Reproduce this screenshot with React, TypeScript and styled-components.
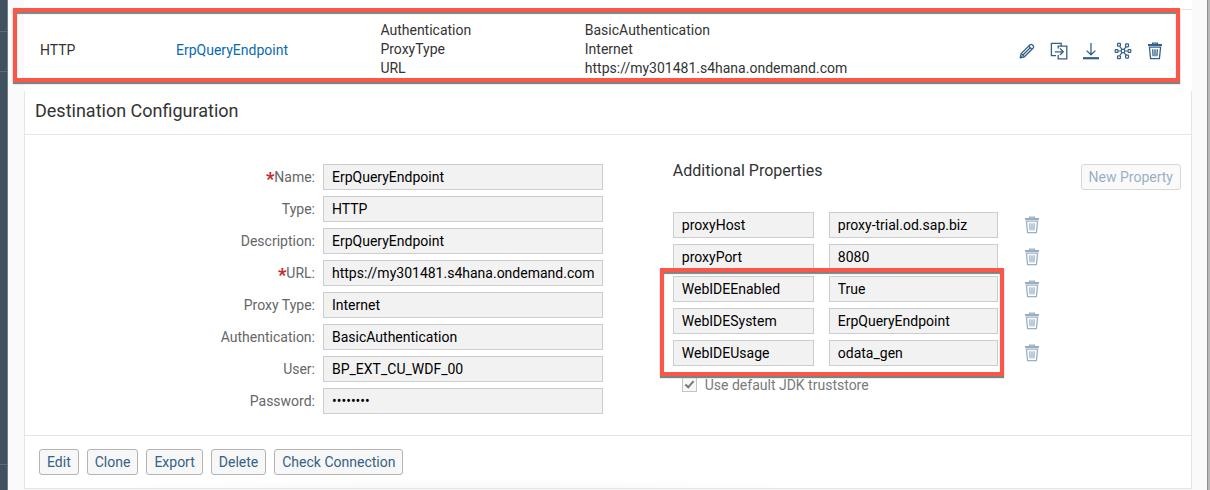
import React from "react";
import styled, { createGlobalStyle } from "styled-components";

const GlobalStyle = createGlobalStyle`
  *, *::before, *::after { box-sizing: border-box; }
  body {
    margin: 0;
    background: #fafafa;
    color: #333;
    font-family: Roboto, "Liberation Sans", sans-serif;
    font-size: 14px;
    line-height: 20px;
  }
`;

const Shell = styled.div`
  display: flex;
  min-height: 100vh;
`;

const Rail = styled.div`
  display: flex;
  flex-direction: column;
  flex: 0 0 8px;
  background: #3f5161;
  border-right: 1px solid #6f7d89;
`;

const RailSlot = styled.div<{ $height?: number }>`
  ${({ $height }) => ($height ? `height: ${$height}px;` : "flex: 1;")}
  border-bottom: 1px solid #5a6c7b;
`;

const RailEnd = styled.div`
  height: 25px;
`;

const WindowEdge = styled.div`
  flex: 0 0 3px;
  background: #b9b9b9;
  border-left: 1px solid #8f8f8f;
`;

const Main = styled.main`
  flex: 1;
  min-width: 0;
  padding: 0 15px 0 16px;
`;

const ListArea = styled.section`
  position: relative;
  padding: 9px 0;
  background: #fff;
`;

const Frame = styled.div`
  position: absolute;
  border: 4px solid #fc5648;
  box-shadow: 0 2px 1px #7d8381, inset 0 2px 1px #7d8381;
  pointer-events: none;
`;

const RowFrame = styled(Frame)`
  inset: 8px 12px 9px -11px;
`;

const GroupFrame = styled(Frame)`
  inset: -8px 0 -10px -13px;
  width: calc(64% + 19px);
`;

const DestinationTable = styled.table`
  width: 100%;
  border-collapse: collapse;
  table-layout: fixed;
  border-top: 1px solid #e5e5e5;
`;

const Cell = styled.td<{ $width?: string }>`
  width: ${({ $width }) => $width || "auto"};
  height: 72px;
  padding: 8px 0 0 16px;
  vertical-align: middle;
`;

const ActionCell = styled.td`
  padding: 10px 21px 0 0;
`;

const Line = styled.div`
  line-height: 19px;
  white-space: nowrap;
`;

const DestinationLink = styled.a`
  color: #0a6ab0;
  text-decoration: none;
`;

const Actions = styled.div`
  display: flex;
  justify-content: flex-end;
`;

const IconButton = styled.button<{ $muted?: boolean }>`
  display: flex;
  flex: 0 0 32px;
  align-items: center;
  justify-content: center;
  height: 26px;
  padding: 0;
  border: 0;
  background: none;
  color: #346187;
  opacity: ${({ $muted }) => ($muted ? 0.5 : 1)};
`;

const Panel = styled.section`
  background: #fff;
  border: 1px solid #e5e5e5;
  border-top: 0;
`;

const PanelHeader = styled.header`
  padding: 8px 10px 11px;
  border-bottom: 1px solid #e5e5e5;
`;

const PanelTitle = styled.h1`
  margin: 0;
  font-size: 18px;
  line-height: 24px;
  font-weight: 400;
`;

const PanelBody = styled.div`
  display: grid;
  grid-template-columns: minmax(0, 5fr) minmax(0, 4fr);
  padding: 29px 0 21px;
`;

const Form = styled.form`
  display: flex;
  flex-direction: column;
  gap: 6px;
  padding-right: 70px;
`;

const FormRow = styled.div`
  display: flex;
  align-items: center;
  gap: 8px;
`;

const Label = styled.label`
  flex: 0 0 290px;
  text-align: right;
  color: #666;
`;

const Required = styled.span`
  color: #c22f33;
  font-size: 18px;
  font-weight: 900;
  line-height: 16px;
  vertical-align: bottom;
`;

const Field = styled.input`
  flex: 1;
  width: 100%;
  min-width: 0;
  height: 26px;
  padding: 0 8px;
  border: 1px solid #ccc;
  border-radius: 0;
  background: #f2f2f2;
  color: #000;
  font: inherit;
  outline: 0;
`;

const Properties = styled.div`
  padding-right: 10px;
`;

const PropertiesHeader = styled.div`
  display: flex;
  justify-content: space-between;
  margin-bottom: 22px;
`;

const PropertiesTitle = styled.h2`
  margin: 0;
  font-size: 16px;
  line-height: 14px;
  font-weight: 400;
`;

const Button = styled.button`
  height: 26px;
  padding: 0 7px;
  border: 1px solid #b3b3b3;
  border-radius: 3px;
  background: #f7f7f7;
  color: #346187;
  font: inherit;
  &:disabled {
    opacity: 0.5;
  }
`;

const PropertyGroup = styled.div`
  position: relative;
  display: flex;
  flex-direction: column;
  gap: 6px;
  margin-bottom: 6px;
`;

const PropertyRow = styled.div`
  display: flex;
  gap: 18px;
`;

const PropertyFields = styled.div`
  display: grid;
  grid-template-columns: 5fr 6fr;
  gap: 15px;
  width: 64%;
`;

const CheckLabel = styled.label`
  display: flex;
  align-items: center;
  gap: 8px;
  padding: 3px 0 0 9px;
  color: #7a7a7a;
`;

const Checkbox = styled.input`
  appearance: none;
  width: 15px;
  height: 15px;
  margin: 0;
  border: 1px solid #c4c4c4;
  background: #f7f7f7;
  display: grid;
  place-items: center;
  &:checked::after {
    content: "";
    width: 5px;
    height: 9px;
    margin-top: -2px;
    border: solid #777;
    border-width: 0 2px 2px 0;
    transform: rotate(42deg);
  }
`;

const PanelFooter = styled.footer`
  display: flex;
  gap: 8px;
  padding: 13px 14px;
  border-top: 1px solid #e5e5e5;
  background: radial-gradient(ellipse 34% 30% at 37% 110%, #f5f5f5, #fff);
`;

const Svg = ({ children }: { children: React.ReactNode }) => (
  <svg width="18" height="18" viewBox="0 0 18 18" fill="none" stroke="currentColor" strokeWidth="1.3" aria-hidden="true">
    {children}
  </svg>
);

const PencilIcon = () => (
  <Svg>
    <path d="M2.2 15.8 3.2 11.6 12 2.8Q13.2 1.8 14.4 3L15.2 3.8Q16.2 4.9 15.2 6L6.4 14.8Z" strokeLinejoin="round" />
    <path d="M3.2 11.6 6.4 14.8M10.8 4.2 13.8 7.2M5.2 12.8 12 6" />
    <path d="M2 16 2.7 13.2 4.8 15.3Z" fill="currentColor" stroke="none" />
  </Svg>
);

const CloneIcon = () => (
  <Svg>
    <path d="M6 13.6H1.4V1.4H11.2V4M8.2 6.4V4.2H16.8V16.8H8.2V13M4.8 9.8H13M10 6.4 13.2 9.8 10 13" />
  </Svg>
);

const ExportIcon = () => (
  <Svg>
    <path d="M9 1V12.6M4.6 8.6 9 12.8 13.4 8.6" />
    <path d="M1 16.2H17" strokeWidth="2.2" />
  </Svg>
);

const NetworkIcon = () => (
  <Svg>
    <g strokeWidth="1.2">
      <path d="M4 9H7.4M10.6 9H14M5.8 4.6 8 7.4M12.2 4.6 10 7.4M5.8 13.4 8 10.6M12.2 13.4 10 10.6" />
      <rect x="7.4" y="7.4" width="3.2" height="3.2" rx="0.8" />
      <rect x="1.2" y="7.7" width="2.7" height="2.7" rx="0.5" />
      <rect x="14.1" y="7.7" width="2.7" height="2.7" rx="0.5" />
      <rect x="3.5" y="1.3" width="2.9" height="2.9" rx="0.5" />
      <rect x="11.6" y="1.9" width="2.9" height="2.9" rx="0.5" />
      <rect x="3.5" y="13.8" width="2.9" height="2.9" rx="0.5" />
      <rect x="11.6" y="13.2" width="2.9" height="2.9" rx="0.5" />
    </g>
  </Svg>
);

const TrashIcon = () => (
  <Svg>
    <path d="M2 3H16" strokeWidth="2" />
    <path d="M6.6 2V1.2H11.4V2M3.4 5.2 4.6 16.6H13.4L14.6 5.2M2.8 5.2H15.2M6.7 7.2 7.1 14.2M9 7.2V14.2M11.3 7.2 10.9 14.2" />
  </Svg>
);

const rowActions = [
  { name: "Edit", Icon: PencilIcon },
  { name: "Clone", Icon: CloneIcon },
  { name: "Export", Icon: ExportIcon },
  { name: "Check Connection", Icon: NetworkIcon },
  { name: "Delete", Icon: TrashIcon },
];

const fields = [
  { id: "name", label: "Name", value: "ErpQueryEndpoint", required: true },
  { id: "type", label: "Type", value: "HTTP" },
  { id: "description", label: "Description", value: "ErpQueryEndpoint" },
  { id: "url", label: "URL", value: "https://my301481.s4hana.ondemand.com", required: true },
  { id: "proxy-type", label: "Proxy Type", value: "Internet" },
  { id: "authentication", label: "Authentication", value: "BasicAuthentication" },
  { id: "user", label: "User", value: "BP_EXT_CU_WDF_00" },
  { id: "password", label: "Password", value: "password", type: "password" },
];

const proxyProperties = [
  ["proxyHost", "proxy-trial.od.sap.biz"],
  ["proxyPort", "8080"],
];

const webIdeProperties = [
  ["WebIDEEnabled", "True"],
  ["WebIDESystem", "ErpQueryEndpoint"],
  ["WebIDEUsage", "odata_gen"],
];

const PropertyRows = ({ items }: { items: string[][] }) => (
  <>
    {items.map(([key, value]) => (
      <PropertyRow key={key}>
        <PropertyFields>
          <Field readOnly aria-label={`${key} key`} value={key} />
          <Field readOnly aria-label={`${key} value`} value={value} />
        </PropertyFields>
        <IconButton type="button" disabled $muted aria-label={`Delete ${key}`}>
          <TrashIcon />
        </IconButton>
      </PropertyRow>
    ))}
  </>
);

export default function App() {
  return (
    <>
      <GlobalStyle />
      <Shell>
        <Rail>
          <RailSlot $height={32} />
          <RailSlot $height={40} />
          <RailSlot />
          <RailEnd />
        </Rail>
        <Main>
          <ListArea>
            <DestinationTable>
              <tbody>
                <tr>
                  <Cell $width="136px">HTTP</Cell>
                  <Cell $width="17.5%">
                    <DestinationLink href="#destination">ErpQueryEndpoint</DestinationLink>
                  </Cell>
                  <Cell $width="17.5%">
                    <Line>Authentication</Line>
                    <Line>ProxyType</Line>
                    <Line>URL</Line>
                  </Cell>
                  <Cell>
                    <Line>BasicAuthentication</Line>
                    <Line>Internet</Line>
                    <Line>https://my301481.s4hana.ondemand.com</Line>
                  </Cell>
                  <ActionCell>
                    <Actions>
                      {rowActions.map(({ name, Icon }) => (
                        <IconButton key={name} type="button" aria-label={name}>
                          <Icon />
                        </IconButton>
                      ))}
                    </Actions>
                  </ActionCell>
                </tr>
              </tbody>
            </DestinationTable>
            <RowFrame />
          </ListArea>

          <Panel id="destination">
            <PanelHeader>
              <PanelTitle>Destination Configuration</PanelTitle>
            </PanelHeader>
            <PanelBody>
              <Form>
                {fields.map(({ id, label, value, required, type }) => (
                  <FormRow key={id}>
                    <Label htmlFor={id}>
                      {required && <Required>*</Required>}
                      {label}:
                    </Label>
                    <Field id={id} type={type || "text"} value={value} readOnly />
                  </FormRow>
                ))}
              </Form>
              <Properties>
                <PropertiesHeader>
                  <PropertiesTitle>Additional Properties</PropertiesTitle>
                  <Button type="button" disabled>New Property</Button>
                </PropertiesHeader>
                <PropertyGroup>
                  <PropertyRows items={proxyProperties} />
                </PropertyGroup>
                <PropertyGroup>
                  <PropertyRows items={webIdeProperties} />
                  <GroupFrame />
                </PropertyGroup>
                <CheckLabel>
                  <Checkbox type="checkbox" checked disabled readOnly />
                  Use default JDK truststore
                </CheckLabel>
              </Properties>
            </PanelBody>
            <PanelFooter>
              {["Edit", "Clone", "Export", "Delete", "Check Connection"].map((name) => (
                <Button key={name} type="button">{name}</Button>
              ))}
            </PanelFooter>
          </Panel>
        </Main>
        <WindowEdge />
      </Shell>
    </>
  );
}
